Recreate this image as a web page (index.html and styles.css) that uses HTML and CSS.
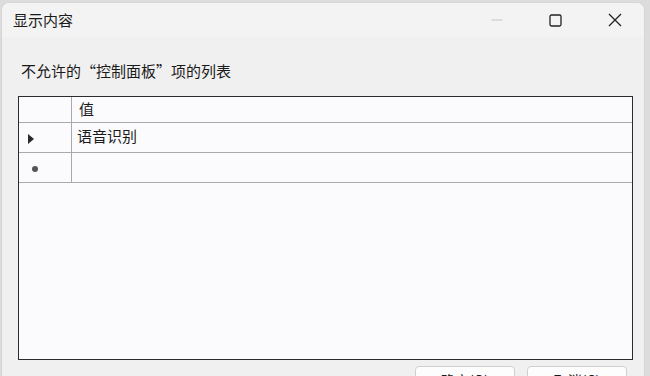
FILE: index.html
```html
<!DOCTYPE html>
<html lang="zh">
<head>
    <meta charset="UTF-8">
    <title>显示内容</title>
    <link rel="stylesheet" href="styles.css">
</head>
<body>
    <div class="window">
        <div class="titlebar">
            <span class="title">显示内容</span>
            <div class="caption-buttons">
                <span class="cap-btn min">
                    <svg width="12" height="12" viewBox="0 0 12 12"><path d="M0.5 6h11" stroke="#c4c4c4" stroke-width="1"/></svg>
                </span>
                <span class="cap-btn">
                    <svg width="13" height="13" viewBox="0 0 13 13"><rect x="1" y="1" width="11" height="11" rx="1.5" fill="none" stroke="#222" stroke-width="1.3"/></svg>
                </span>
                <span class="cap-btn">
                    <svg width="14" height="14" viewBox="0 0 14 14"><path d="M1 1L13 13M13 1L1 13" stroke="#222" stroke-width="1.3"/></svg>
                </span>
            </div>
        </div>

        <div class="content">
            <div class="label">不允许的“控制面板”项的列表</div>

            <div class="grid">
                <div class="row header">
                    <div class="row-head"></div>
                    <div class="cell">值</div>
                </div>
                <div class="row">
                    <div class="row-head"><span class="arrow"></span></div>
                    <div class="cell">语音识别</div>
                </div>
                <div class="row">
                    <div class="row-head"><span class="dot"></span></div>
                    <div class="cell"></div>
                </div>
                <div class="grid-empty"></div>
            </div>

            <div class="buttons">
                <button>确定(O)</button>
                <button>取消(C)</button>
            </div>
        </div>
    </div>
</body>
</html>
```

FILE: styles.css
```css
body {
    margin: 0;
    height: 376px;
    overflow: hidden;
    background-color: #dcdcdc;
    font-family: "Noto Sans CJK SC", "Liberation Sans", sans-serif;
    color: #1a1a1a;
}

.window {
    margin: 2px 5px 0 1px;
    height: 374px;
    background-color: #f0f0f0;
    border: 1px solid #d6d6d6;
    border-bottom: none;
    border-radius: 8px 8px 0 0;
    overflow: hidden;
    display: flex;
    flex-direction: column;
}

.titlebar {
    flex-shrink: 0;
    height: 34px;
    display: flex;
    align-items: center;
    justify-content: space-between;
    background-color: #f3f3f3;
}

.title {
    font-size: 15px;
    margin-left: 11px;
    margin-top: -1px;
}

.caption-buttons {
    display: flex;
    height: 100%;
}

.cap-btn {
    width: 59px;
    display: flex;
    align-items: center;
    justify-content: center;
}

.content {
    flex-shrink: 0;
    padding: 0 11px 0 16px;
    display: flex;
    flex-direction: column;
}

.label {
    flex-shrink: 0;
    font-size: 15px;
    margin-top: 23px;
    margin-left: 3px;
    height: 36px;
}

.grid {
    flex-shrink: 0;
    height: 262px;
    border: 1px solid #2b2b2b;
    background-color: #fbfbfd;
    display: flex;
    flex-direction: column;
}

.row {
    display: flex;
    height: 29px;
    border-bottom: 1px solid #a9a9a9;
}

.row.header {
    height: 25px;
}

.row-head {
    width: 53px;
    border-right: 1px solid #a9a9a9;
    display: flex;
    align-items: center;
    padding-left: 9px;
    box-sizing: border-box;
}

.cell {
    flex: 1;
    font-size: 15px;
    padding-left: 5px;
    line-height: 26px;
}

.header .cell {
    padding-left: 7px;
    line-height: 24px;
}

.arrow {
    width: 0;
    height: 0;
    margin-top: 3px;
    border-top: 5px solid transparent;
    border-bottom: 5px solid transparent;
    border-left: 6px solid #2a2a2a;
}

.dot {
    width: 6px;
    height: 6px;
    margin-left: 4px;
    margin-top: 2px;
    border-radius: 50%;
    background-color: #555;
}

.grid-empty {
    flex: 1;
}

.buttons {
    display: flex;
    justify-content: flex-end;
    gap: 12px;
    margin-top: 6px;
    padding-right: 6px;
}

button {
    width: 100px;
    height: 28px;
    font-family: inherit;
    font-size: 14px;
    background-color: #fdfdfd;
    border: 1px solid #d0d0d0;
    border-radius: 4px;
    color: #1a1a1a;
    padding: 0;
}
```
